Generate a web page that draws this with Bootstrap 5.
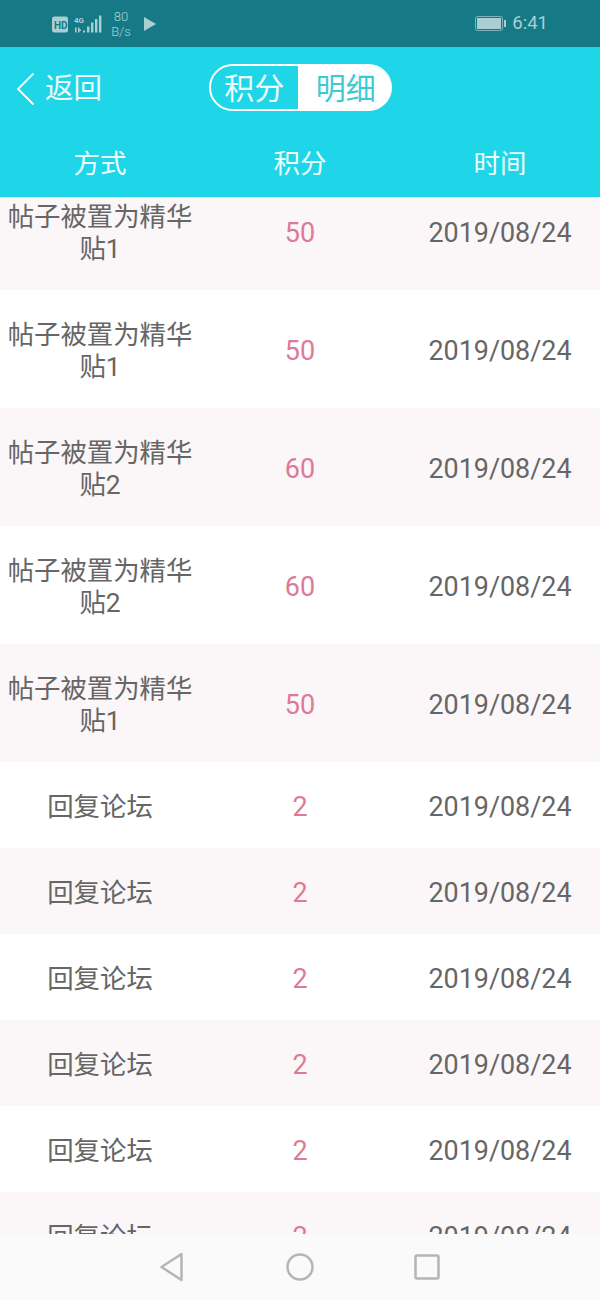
<!DOCTYPE html>
<html lang="zh">
<head>
  <meta charset="UTF-8" />
  <meta name="viewport" content="width=device-width, initial-scale=1.0"/>
  <title>积分明细</title>
  <link href="https://cdn.jsdelivr.net/npm/bootstrap@5.3.0/dist/css/bootstrap.min.css" rel="stylesheet"/>
  <style>
    body {
      margin: 0;
      width: 600px;
      height: 1300px;
      overflow: hidden;
      font-family: Roboto, "Noto Sans CJK SC", sans-serif;
      font-weight: 400;
      color: #666;
    }

    /* Status bar */
    .status-bar {
      height: 47px;
      background-color: #157a85;
      color: #a9cfd3;
      padding: 0 52px;
    }
    .speed-text { font-size: 13px; line-height: 15px; width: 22px; margin-left: 8px; font-weight: 300; }
    .play-mark { margin-left: 12px; }
    .clock-text { font-size: 18.5px; line-height: 1; margin-left: 6px; }

    /* Header */
    .top-head { height: 150px; background-color: #1fd6e8; color: #eefcfd; }
    .nav-line { height: 86px; padding-top: 17px; }
    .back-link { left: 16px; top: 24px; font-size: 28.5px; line-height: 36px; gap: 10px; }
    .switcher { width: 183px; height: 47px; font-size: 30px; }
    .switcher-item { width: 50%; line-height: 45px; }
    .switcher-left { border: 2px solid #fff; border-radius: 24px 0 0 24px; }
    .switcher-right { background-color: #fff; color: #3ccbd4; border-radius: 0 24px 24px 0; line-height: 49px; }
    .head-cols { height: 64px; font-size: 26.5px; line-height: 34px; padding-top: 14px; }

    /* List */
    .list-view { height: 1037px; overflow: hidden; border-top: 1px solid #e8f7f8; }
    .list-inner { margin-top: -26px; }
    .data-row { height: 118px; background-color: #fff; padding-top: 4px; }
    .data-row.short-row { height: 86px; }
    .data-row:nth-child(odd) { background-color: #fbf6f8; }
    .way-cell { width: 200px; padding: 0 6px; font-size: 26.4px; line-height: 32px; }
    .score-cell { width: 200px; font-size: 27px; color: #de7a98; }
    .date-cell { width: 200px; font-size: 26.9px; color: #666; }

    /* Bottom nav */
    .bottom-nav { height: 66px; background-color: #fafafa; }
    .nav-key { width: 127px; }
  </style>
</head>
<body>

<!-- Status bar -->
<div class="status-bar d-flex align-items-center">
  <svg width="50" height="20" viewBox="0 0 50 20" class="flex-shrink-0">
    <rect x="0" y="2.5" width="16" height="16" rx="2.5" fill="#a9cfd3"/>
    <text x="2" y="14.5" font-size="10" font-weight="700" font-family="Roboto" fill="#157a85">HD</text>
    <text x="22" y="8.5" font-size="8" font-weight="700" font-family="Roboto" fill="#a9cfd3">4G</text>
    <path d="M23 13.5h1.5v5H23zM26 15.5h3v1.5h-3zM26 13.5h1.5v5H26zM31 16.5h2v2h-2z" fill="#a9cfd3"/>
    <rect x="35" y="12.5" width="2.4" height="6" fill="#a9cfd3"/>
    <rect x="39" y="8.5" width="2.4" height="10" fill="#a9cfd3"/>
    <rect x="43" y="5" width="2.4" height="13.5" fill="#a9cfd3"/>
    <rect x="47" y="1.5" width="2.4" height="17" fill="#a9cfd3"/>
  </svg>
  <div class="speed-text text-center flex-shrink-0">80<br>B/s</div>
  <svg width="12" height="14" viewBox="0 0 12 14" class="play-mark flex-shrink-0"><path d="M0 0L12 7L0 14Z" fill="#a9cfd3"/></svg>
  <div class="ms-auto d-flex align-items-center">
    <svg width="31" height="16" viewBox="0 0 31 16">
      <rect x="0.5" y="0.5" width="27" height="14" rx="2" fill="none" stroke="#a9cfd3" stroke-opacity=".7"/>
      <rect x="2" y="2" width="24" height="11" fill="#a9cfd3"/>
      <rect x="29" y="4" width="2" height="7" fill="#a9cfd3"/>
    </svg>
    <span class="clock-text">6:41</span>
  </div>
</div>

<!-- Header -->
<div class="top-head">
  <div class="nav-line position-relative d-flex justify-content-center">
    <div class="back-link position-absolute d-flex align-items-center">
      <svg width="19" height="34" viewBox="0 0 19 34"><path d="M17.5 1.5L2 17L17.5 32.5" fill="none" stroke="#fff" stroke-width="1.8"/></svg>
      <span>返回</span>
    </div>
    <div class="switcher d-flex text-center">
      <div class="switcher-item switcher-left">积分</div>
      <div class="switcher-item switcher-right">明细</div>
    </div>
  </div>
  <div class="head-cols d-flex text-center">
    <div class="flex-fill w-100">方式</div>
    <div class="flex-fill w-100">积分</div>
    <div class="flex-fill w-100">时间</div>
  </div>
</div>

<!-- List -->
<div class="list-view">
  <div class="list-inner" id="rows"></div>
</div>

<!-- Bottom nav -->
<div class="bottom-nav d-flex justify-content-center align-items-center">
  <div class="nav-key text-center"><svg width="28" height="30" viewBox="0 0 28 30"><path d="M22.5 2V28L2.5 15Z" fill="none" stroke="#b5b5b5" stroke-width="2.5" stroke-linejoin="round"/></svg></div>
  <div class="nav-key text-center"><svg width="28" height="28" viewBox="0 0 28 28"><circle cx="14" cy="14" r="12.5" fill="none" stroke="#b5b5b5" stroke-width="2.5"/></svg></div>
  <div class="nav-key text-center"><svg width="26" height="26" viewBox="0 0 26 26"><rect x="1.5" y="1.5" width="23" height="23" rx="1.5" fill="none" stroke="#b5b5b5" stroke-width="2.5"/></svg></div>
</div>

<script>
  // list data, top row is scrolled partly under the header
  const data = [
    ['帖子被置为精华贴1', 50], ['帖子被置为精华贴1', 50], ['帖子被置为精华贴2', 60],
    ['帖子被置为精华贴2', 60], ['帖子被置为精华贴1', 50],
    ['回复论坛', 2], ['回复论坛', 2], ['回复论坛', 2], ['回复论坛', 2], ['回复论坛', 2], ['回复论坛', 2]
  ];
  document.getElementById('rows').innerHTML = data.map(d => `
    <div class="data-row d-flex align-items-center text-center ${d[1] === 2 ? 'short-row' : ''}">
      <div class="way-cell">${d[0]}</div>
      <div class="score-cell">${d[1]}</div>
      <div class="date-cell">2019/08/24</div>
    </div>`).join('');
</script>

<script src="https://cdn.jsdelivr.net/npm/bootstrap@5.3.0/dist/js/bootstrap.bundle.min.js"></script>
</body>
</html>
